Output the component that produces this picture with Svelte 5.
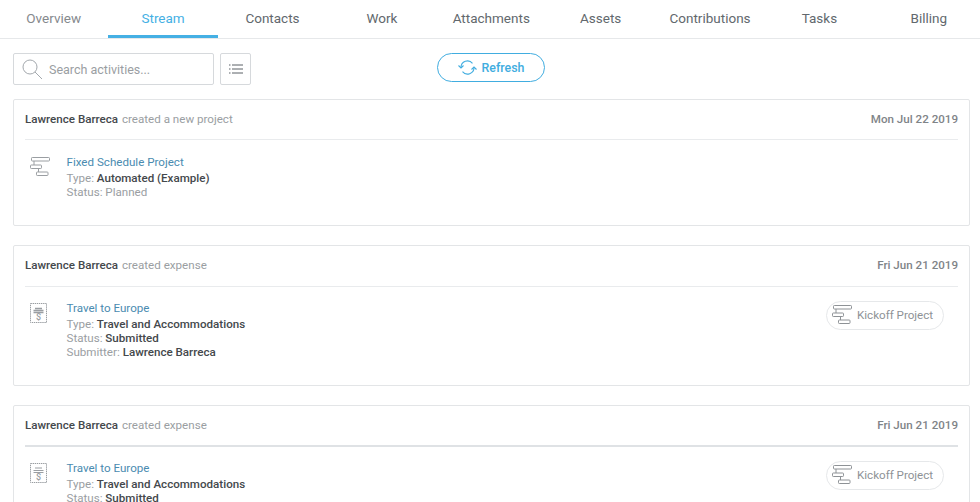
<script>
  const tabs = ['Overview', 'Stream', 'Contacts', 'Work', 'Attachments', 'Assets', 'Contributions', 'Tasks', 'Billing']
  const expenseLines = [
    { label: 'Type:', value: 'Travel and Accommodations' },
    { label: 'Status:', value: 'Submitted' },
    { label: 'Submitter:', value: 'Lawrence Barreca' }
  ]
  const activities = [
    {
      verb: 'created a new project',
      date: 'Mon Jul 22 2019',
      title: 'Fixed Schedule Project',
      icon: 'gantt',
      lines: [
        { label: 'Type:', value: 'Automated (Example)' },
        { label: 'Status: Planned', value: '' }
      ]
    },
    {
      verb: 'created expense',
      date: 'Fri Jun 21 2019',
      title: 'Travel to Europe',
      icon: 'stamp',
      project: 'Kickoff Project',
      lines: expenseLines
    },
    {
      verb: 'created expense',
      date: 'Fri Jun 21 2019',
      title: 'Travel to Europe',
      icon: 'receipt',
      project: 'Kickoff Project',
      lines: expenseLines
    }
  ]
</script>

{#snippet gantt()}
  <svg width="20" height="20" viewBox="0 0 20 20" fill="none" stroke="currentColor" stroke-width="1">
    <rect x="1.500" y="0.500" width="18" height="3.500" rx="0.800" />
    <rect x="0.500" y="8" width="11" height="3.500" rx="0.800" />
    <rect x="6.500" y="15" width="11.500" height="3.500" rx="0.800" />
    <path d="M4 4v4M8.500 11.500v3.500" />
  </svg>
{/snippet}

{#snippet receipt(kind)}
  <svg width="17" height="20" viewBox="0 0 17 20" fill="none" stroke="currentColor" stroke-width="1">
    <path d="M0.500 0.500h16v19h-16z" stroke-dasharray="1.400 0.700" />
    {#if kind === 'stamp'}
      <path d="M5 5.500h7M3.500 7.500h10M3.500 9.500h10" stroke-width="1.500" />
    {:else}
      <path d="M5 5h7M3.500 7.500h10M3.500 9.500h10" />
    {/if}
    <text x="8.500" y="17" text-anchor="middle" font-size="9" font-weight="500" font-family="Roboto, sans-serif" fill="currentColor" stroke="none">$</text>
  </svg>
{/snippet}

<div class="page">
  <nav class="tabs">
    {#each tabs as tab}
      <a class="tab" class:active={tab === 'Stream'} href="#top">{tab}</a>
    {/each}
  </nav>

  <div class="toolbar">
    <div class="left-tools">
      <label class="search">
        <svg width="21" height="21" viewBox="0 0 21 21" fill="none" stroke="#a3a8ad" stroke-width="1">
          <circle cx="8" cy="8" r="7" />
          <path d="M13 13l7 7" />
        </svg>
        <input type="text" placeholder="Search activities..." />
      </label>
      <button class="list-btn" type="button" aria-label="Filter">
        <svg width="14" height="10" viewBox="0 0 14 10" fill="none" stroke="#5b6166" stroke-width="1">
          <path d="M3 1h11M3 5h11M3 9h11M0 1h1.500M0 5h1.500M0 9h1.500" />
        </svg>
      </button>
    </div>
    <button class="refresh" type="button">
      <svg width="19" height="17" viewBox="0 0 19 17" fill="none" stroke="#41ade0" stroke-width="1.100">
        <path d="M3 8.500a6.500 6.500 0 0 1 11.500-4.200M16 8.500a6.500 6.500 0 0 1-11.500 4.200" />
        <path d="M0.500 6.500l2.500 2.500 2.500-2.500M13.500 10.500l2.500-2.500 2.500 2.500" />
      </svg>
      Refresh
    </button>
  </div>

  <div class="stream">
    {#each activities as item, i}
      <article class="card" class:short={i === 0}>
        <header class="card-head" class:strong={i === 2}>
          <span><b>Lawrence Barreca</b> <span class="verb">{item.verb}</span></span>
          <span class="date">{item.date}</span>
        </header>
        <div class="card-body">
          <div class="icon">
            {#if item.icon === 'gantt'}
              {@render gantt()}
            {:else}
              {@render receipt(item.icon)}
            {/if}
          </div>
          <div class="info">
            <a class="title" href="#top">{item.title}</a>
            {#each item.lines as line}
              <div class="line">{line.label} {#if line.value}<b>{line.value}</b>{/if}</div>
            {/each}
          </div>
          {#if item.project}
            <div class="project">
              {@render gantt()}
              <span>{item.project}</span>
            </div>
          {/if}
        </div>
      </article>
    {/each}
  </div>
</div>

<style>
  :global(body) {
    margin: 0;
    background: #fff;
    font-family: Roboto, sans-serif;
    overflow: hidden;
  }

  .page {
    height: 502px;
    overflow: hidden;
  }

  .tabs {
    display: flex;
    height: 38px;
    border-bottom: 1px solid #e6e8ea;
    margin-left: -1px;
    width: 985px;
  }

  .tab {
    flex: 0 0 109.4px;
    box-sizing: border-box;
    height: 38px;
    padding-top: 10px;
    text-align: center;
    font-size: 13.5px;
    line-height: 16px;
    color: #62686d;
    text-decoration: none;
  }

  .tab:first-child {
    color: #85898d;
  }

  .tab.active {
    color: #45b0e4;
    border-bottom: 3px solid #45b0e4;
  }

  .toolbar {
    position: relative;
    display: flex;
    justify-content: center;
    padding: 14px 11px 0 13px;
    height: 45px;
  }

  .left-tools {
    position: absolute;
    left: 13px;
    top: 14px;
    display: flex;
    gap: 6px;
  }

  .search {
    box-sizing: border-box;
    width: 201px;
    height: 32px;
    display: flex;
    align-items: center;
    gap: 6px;
    padding-left: 8px;
    border: 1px solid #d6d9dc;
    border-radius: 2px;
  }

  .search input {
    border: 0;
    outline: 0;
    padding: 0;
    width: 150px;
    font: 12.5px Roboto, sans-serif;
    color: #333;
  }

  .search input::placeholder {
    color: #9a9ea2;
    opacity: 1;
  }

  .list-btn {
    box-sizing: border-box;
    width: 31px;
    height: 32px;
    padding: 0;
    background: #fff;
    border: 1px solid #d6d9dc;
    border-radius: 2px;
    display: flex;
    align-items: center;
    justify-content: center;
  }

  .refresh {
    box-sizing: border-box;
    width: 108px;
    height: 29px;
    display: flex;
    align-items: center;
    justify-content: center;
    gap: 5px;
    padding: 0;
    background: #fff;
    border: 1px solid #41ade0;
    border-radius: 15px;
    color: #41ade0;
    font: 500 12.4px Roboto, sans-serif;
  }

  .stream {
    display: flex;
    flex-direction: column;
    gap: 19px;
    padding: 0 10px 0 13px;
    margin-top: 1px;
  }

  .card {
    box-sizing: border-box;
    height: 141px;
    border: 1px solid #e3e5e7;
    border-radius: 2px;
    padding: 0 11px;
  }

  .card.short {
    height: 127px;
  }

  .card-head {
    height: 41px;
    padding-bottom: 3px;
    display: flex;
    justify-content: space-between;
    align-items: center;
    box-sizing: border-box;
    border-bottom: 1px solid #e9ebed;
    font-size: 11.6px;
    color: #9a9ea2;
  }

  .card.short .card-head {
    height: 40px;
    padding-bottom: 2px;
  }

  .card-head.strong {
    border-bottom: 2px solid #dfe2e5;
    padding-bottom: 2px;
  }

  .card-head b {
    font-weight: 500;
    color: #44484c;
  }

  .verb {
    margin-left: 1px;
  }

  .date {
    font-weight: 500;
    color: #7f8488;
  }

  .card-body {
    display: flex;
    padding-top: 14px;
  }

  .card.short .card-body {
    padding-top: 15px;
  }

  .icon {
    width: 41.500px;
    padding-left: 5px;
    box-sizing: border-box;
    color: #9a9ea2;
    padding-top: 2px;
    line-height: 0;
  }

  .info {
    font-size: 11.6px;
    line-height: 14px;
    color: #9a9ea2;
    flex: 1;
  }

  .title {
    display: block;
    color: #4a8bb0;
    text-decoration: none;
    margin-bottom: 2px;
  }

  .line b {
    font-weight: 500;
    color: #44484c;
  }

  .project {
    box-sizing: border-box;
    width: 118px;
    height: 29px;
    margin-right: 14px;
    padding: 0 0 1px 5px;
    display: flex;
    align-items: center;
    gap: 5px;
    border: 1px solid #e6e8ea;
    border-radius: 15px;
    color: #8e9296;
    font-size: 11.6px;
  }

  .project svg {
    flex: none;
  }
</style>
